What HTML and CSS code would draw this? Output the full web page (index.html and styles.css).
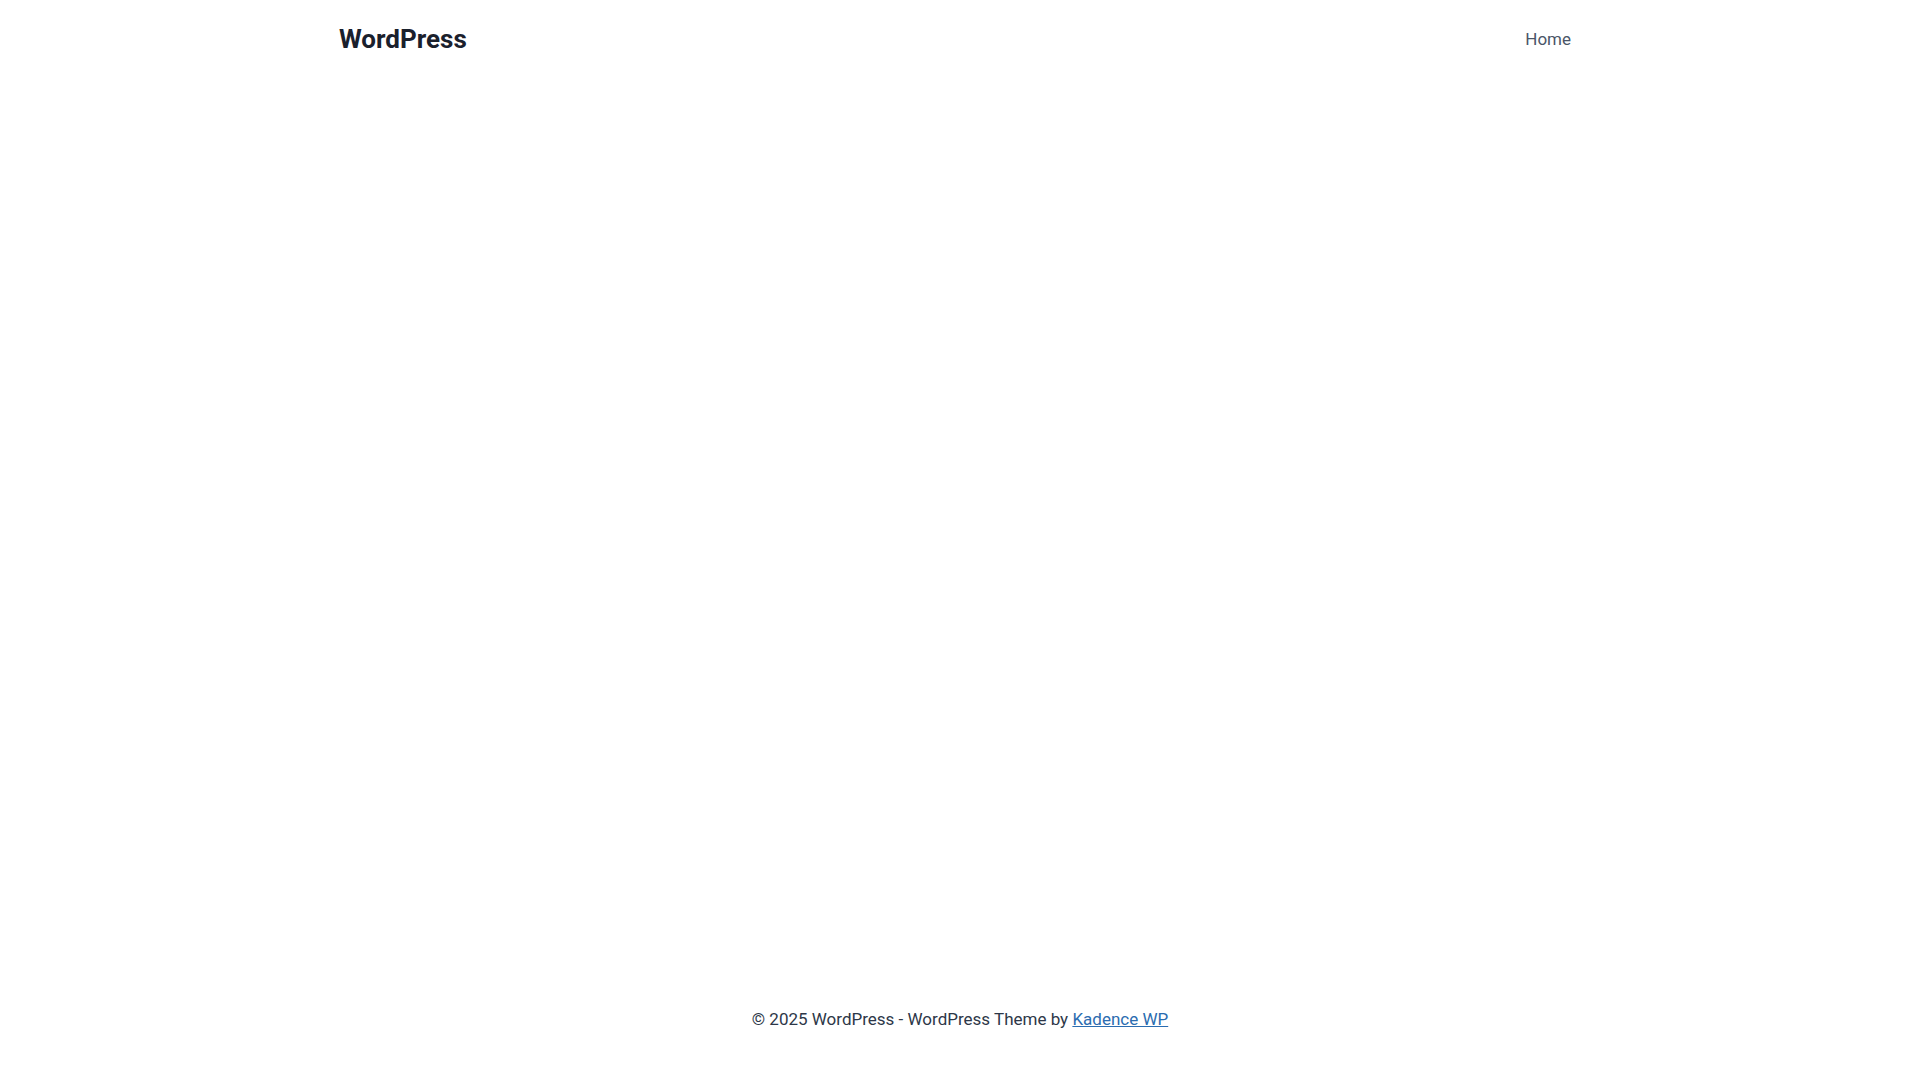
FILE: index.html
```html
<!DOCTYPE html>
<html lang="en">
<head>
<meta charset="utf-8">
<title>WordPress</title>
<link rel="stylesheet" href="styles.css">
</head>
<body>
<div class="site">
  <header class="site-header">
    <div class="container header-row">
      <a class="site-title" href="#">WordPress</a>
      <nav class="main-nav">
        <a class="nav-link" href="#">Home</a>
      </nav>
    </div>
  </header>
  <main class="site-main"></main>
  <footer class="site-footer">
    <div class="container footer-row">
      <p class="footer-text">© 2025 WordPress - WordPress Theme by <a class="footer-link" href="#">Kadence WP</a></p>
    </div>
  </footer>
</div>
</body>
</html>
```
FILE: styles.css
```css
html, body {
  margin: 0;
  padding: 0;
  background: #ffffff;
}
body {
  font-family: Roboto, "Liberation Sans", sans-serif;
  font-size: 17px;
  line-height: 1.6;
  color: #4a5568;
}
.site {
  min-height: 100vh;
  display: flex;
  flex-direction: column;
}
.container {
  max-width: 1290px;
  margin: 0 auto;
  padding: 0 24px;
  box-sizing: border-box;
  width: 100%;
}
.header-row {
  height: 80px;
  display: flex;
  align-items: center;
  justify-content: space-between;
}
.site-title {
  font-size: 26px;
  font-weight: 700;
  color: #1a202c;
  text-decoration: none;
  line-height: 1.2;
}
.main-nav {
  display: flex;
}
.nav-link {
  color: #4a5568;
  text-decoration: none;
  font-size: 17px;
  padding: 10px 10px 10px 11px;
}
.site-main {
  flex: 1;
}
.footer-row {
  padding-top: 31px;
  padding-bottom: 47px;
  text-align: center;
}
.footer-text {
  margin: 0;
  color: #2d3748;
}
.footer-link {
  color: #2b6cb0;
  text-decoration: underline;
}
```
